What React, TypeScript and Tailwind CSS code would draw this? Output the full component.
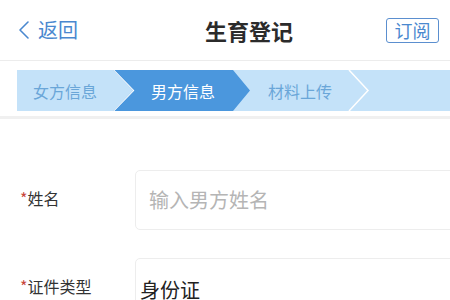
import { ChevronLeft } from 'lucide-react';

const steps = [
    { label: '女方信息', state: 'done' },
    { label: '男方信息', state: 'active' },
    { label: '材料上传', state: 'todo' },
];

const Separator = () => (
    <svg width="22" height="41" viewBox="0 0 22 41" className="shrink-0 -ml-[2px]">
        <polyline points="1,0 20,20.5 1,41" fill="none" stroke="#ffffff" strokeWidth="1.5" />
    </svg>
);

export default function App() {
    return (
        <div className="w-[450px] h-[300px] overflow-hidden bg-white font-['Noto_Sans_CJK_SC',sans-serif]">
            {/* header */}
            <div className="h-[61px] flex items-center border-b border-[#ececec]">
                <div className="w-[205px] flex items-center pl-[8px] text-[#4a88cf]">
                    <ChevronLeft size={32} strokeWidth={1.2} className="-mr-[2px]" />
                    <span className="text-[20px] leading-none">返回</span>
                </div>
                <h1 className="text-[22px] font-bold text-[#2b2b2b] leading-none">生育登记</h1>
                <div className="flex-1" />
                <button className="mr-[11px] w-[53px] h-[25px] border border-[#5b8fcf] rounded-[3px] text-[#4a88cf] text-[18px] leading-none flex items-center justify-center">
                    订阅
                </button>
            </div>

            {/* stepper */}
            <div className="pt-[9px] pb-[5px] pl-[17px] border-b-[3px] border-[#f0f0f0]">
                <div className="h-[41px] bg-[#c4e2f9] flex items-stretch">
                    {steps.map((step, i) => {
                        if (step.state === 'active') {
                            return (
                                <div
                                    key={step.label}
                                    className="relative w-[137px] shrink-0 bg-[#4b97dd] text-white flex items-center justify-center pl-[20px] pr-[17px] [clip-path:polygon(0_0,120px_0,137px_50%,120px_100%,0_100%,20px_50%)]"
                                >
                                    <svg width="22" height="41" viewBox="0 0 22 41" className="absolute left-0 top-0">
                                        <polyline points="0,0 20,20.5 0,41" fill="none" stroke="#ffffff" strokeWidth="2" />
                                    </svg>
                                    <span className="text-[16px] leading-none">{step.label}</span>
                                </div>
                            );
                        }
                        return (
                            <div key={step.label} className="flex shrink-0">
                                <div className={`${i === 0 ? 'w-[96px]' : 'w-[100px]'} flex items-center justify-center text-[16px] leading-none text-[#6aa6d8]`}>
                                    {step.label}
                                </div>
                                {step.state === 'todo' && <Separator />}
                            </div>
                        );
                    })}
                </div>
            </div>

            {/* form */}
            <div className="pt-[51px] flex flex-col gap-[28px]">
                <div className="flex items-center">
                    <label className="w-[135px] shrink-0 pl-[20px] text-[16px] text-[#333] leading-none pb-[4px]">
                        <span className="text-[#c8463c]">*</span>姓名
                    </label>
                    <div className="w-[340px] shrink-0 h-[60px] rounded-[5px] border border-[#ededed] flex items-center pl-[13px] text-[20px] text-[#b5b5b5]">
                        输入男方姓名
                    </div>
                </div>
                <div className="flex items-center">
                    <label className="w-[135px] shrink-0 pl-[20px] text-[16px] text-[#333] leading-none pb-[4px]">
                        <span className="text-[#c8463c]">*</span>证件类型
                    </label>
                    <div className="w-[340px] shrink-0 h-[60px] rounded-[5px] border border-[#ededed] flex items-center pl-[4px] pt-[4px] text-[20px] text-[#222]">
                        身份证
                    </div>
                </div>
            </div>
        </div>
    );
}
